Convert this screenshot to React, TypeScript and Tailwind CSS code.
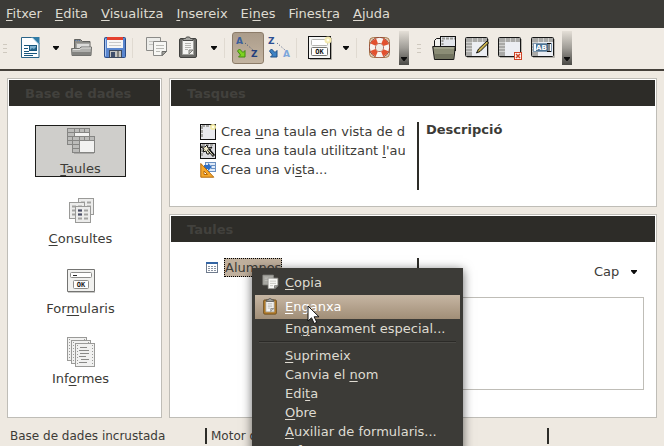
import React from "react";

type Node = React.ReactNode;

/* Label with its mnemonic letter marked by a leading underscore, e.g. "Ei_nes". */
function Mnemonic({ text }: { text: string }) {
  const at = text.indexOf("_");
  if (at < 0) return <>{text}</>;
  return (
    <>
      {text.slice(0, at)}
      <span className="underline decoration-1 underline-offset-2">{text[at + 1]}</span>
      {text.slice(at + 2)}
    </>
  );
}

function Icon({ size = 24, children }: { size?: number; children: Node }) {
  return (
    <svg width={size} height={size} viewBox={`0 0 ${size} ${size}`} fill="none" aria-hidden="true" className="shrink-0">
      {children}
    </svg>
  );
}

function NewDocIcon() {
  return (
    <Icon>
      <path d="M3.5 1.5h11.5l6 6v14h-17.500z" fill="#fdfeff" stroke="#2b6488" />
      <path d="M14 1h7.500v8z" fill="#2f7ba6" />
      <path d="M14 1.500l7 7" stroke="#b9d9ea" />
      <path d="M6 9.500h5M6 12.500h4M6 15.500h5M6 17.500h13M6 19.500h9" stroke="#17567c" />
      <rect x="11.500" y="9.500" width="7" height="5" fill="#7fb2d0" stroke="#17567c" />
      <path d="M12 14l2-2 2 1 2-2v3z" fill="#24658b" />
    </Icon>
  );
}

function OpenIcon() {
  return (
    <Icon>
      <path d="M4.500 14V3.500h6l2 2h7.500V14z" fill="#8d8d89" stroke="#62625f" />
      <path d="M5 4.500h5" stroke="#5576a8" strokeDasharray="1 1" />
      <path d="M6.500 13V7.500h13V13z" fill="#dcdcda" stroke="#a5a5a2" />
      <path d="M1.500 12.500h8l1.500-1.500h10.500l-.5 8.500h-19z" fill="#b0b0ad" stroke="#71716e" />
      <path d="M2 16h19v3H2z" fill="#838380" />
      <path d="M3 13.500h7l1.500-1.500h9.500" stroke="#dededc" />
    </Icon>
  );
}

function SaveIcon() {
  return (
    <Icon>
      <rect x="2.500" y="1.500" width="21" height="20" rx="1" fill="#5a86cf" stroke="#2c4d87" />
      <rect x="5" y="1" width="16" height="3" fill="#e5402e" />
      <rect x="5" y="4" width="16" height="8" fill="#f6f6f6" />
      <path d="M7 6.500h12M7 9.500h12" stroke="#c9c9c9" />
      <path d="M3.500 3v17" stroke="#a7c3ee" />
      <rect x="7.500" y="14.500" width="12" height="7" fill="#c3c3c0" stroke="#3c4a60" />
      <path d="M16 15v6" stroke="#81817d" strokeWidth="2" />
      <rect x="9" y="16" width="4" height="5" fill="#3e4e6b" />
    </Icon>
  );
}

function CopyIcon({ light = false }: { light?: boolean }) {
  const line = light ? "#8e8e88" : "#8b8b88";
  return (
    <Icon>
      <path d="M2.500 1.500h14v13h-14z" fill={light ? "#a7a7a1" : "#ecece9"} stroke={line} />
      <path d="M5 5.500h9M5 8.500h9" stroke="#c4c4c0" />
      <path d="M9.500 5.500h13v10l-4 4h-9z" fill="#f7f7f4" stroke={line} />
      <path d="M12 9.500h8M12 12.500h8M12 15.500h4" stroke="#b9b9b4" />
      <path d="M18 19.500v-4h4.500z" fill="#a9a9a4" stroke="#6b6b68" />
    </Icon>
  );
}

function PasteIcon({ board = "#6a6a67", edge = "#41413f" }: { board?: string; edge?: string }) {
  return (
    <Icon>
      <rect x="3.500" y="2.500" width="17" height="19" rx="1.500" fill={board} stroke={edge} />
      <path d="M6.500 4.500h11v14h-11z" fill="#f4f4f2" stroke="#a3a39f" />
      <path d="M7 4.500v-2h2.500l1-1.500h3l1 1.500h2.500v2z" fill="#a6a6a2" stroke="#4b4b49" />
      <path d="M9 7.500h6M9 9.500h6M9 11.500h6M9 13.500h3" stroke="#b5b5b1" />
      <path d="M13 18v-4h4z" fill="#c9c9c5" stroke="#7f7f7b" />
    </Icon>
  );
}

function SortIcon({ from, to, arrow, edge, a, b }: { from: string; to: string; arrow: string; edge: string; a: string; b: string }) {
  return (
    <Icon>
      <text x="0" y="8" fontFamily="DejaVu Sans" fontWeight="700" fontSize="9" fill={a}>{from}</text>
      <text x="15" y="21" fontFamily="DejaVu Sans" fontWeight="700" fontSize="9" fill={b}>{to}</text>
      <path d="M9 7l8 7" stroke="#3a4e78" strokeDasharray="1 2" />
      <path d="M1.500 15l2-2 3.500 3.500 2-2V21H2.500l2-2z" fill={arrow} stroke={edge} />
    </Icon>
  );
}

function FormIcon() {
  return (
    <Icon>
      <path d="M2 23.500h21.500V2" stroke="#a9a69f" />
      <rect x=".5" y=".5" width="22" height="22" fill="#f6f6f4" stroke="#111111" />
      <rect x="3.500" y="3.500" width="16" height="6" rx="1" fill="#ffffff" stroke="#b5b5b2" />
      <rect x="3.500" y="11.500" width="16" height="8" rx="1" fill="#ffffff" stroke="#777774" />
      <text x="11.500" y="18" textAnchor="middle" fontFamily="DejaVu Sans Mono" fontWeight="700" fontSize="7" fill="#111111">OK</text>
      <circle cx="20" cy="4" r="3.500" fill="#f3e9b0" />
      <circle cx="20" cy="4" r="1.500" fill="#fffde8" />
    </Icon>
  );
}

function HelpIcon() {
  return (
    <Icon>
      <rect x="1.500" y="1.500" width="20" height="20" rx="4" fill="#e3d6bd" stroke="#a9764c" />
      <circle cx="11.500" cy="11.500" r="7" stroke="#8a3a2c" strokeWidth="7" />
      <circle cx="11.500" cy="11.500" r="7" stroke="#f8f3ef" strokeWidth="5.500" />
      <circle cx="11.500" cy="11.500" r="7" stroke="#e2512f" strokeWidth="5.500" strokeDasharray="5.500 5.500" strokeDashoffset="-2.750" />
      <circle cx="11.500" cy="11.500" r="3.500" fill="#f0ebe4" />
    </Icon>
  );
}

function GridBase() {
  return (
    <>
      <path d="M2 21.500h21.500V3" stroke="#b5b2ab" />
      <rect x=".5" y="1.500" width="22" height="19" rx="1" fill="#eceef3" stroke="#161616" />
      <path d="M1 2h21v4H7v14H1z" fill="#a9a9a7" />
      <path d="M7.500 2v4M12.500 2v4M17.500 2v4M1 6.500h6M1 9.500h6M1 12.500h6M1 15.500h6" stroke="#cfcfcd" />
    </>
  );
}

function OpenObjectIcon() {
  return (
    <Icon>
      <path d="M2.500 12V4.500l2-2h4V12z" fill="#f1f1ef" stroke="#111111" />
      <rect x="8.500" y=".5" width="15" height="14" fill="#e3e6ec" stroke="#111111" />
      <path d="M10 2.500h13" stroke="#9b9b98" strokeWidth="2" strokeDasharray="3 1" />
      <path d="M10.500 4v7" stroke="#9b9b98" strokeWidth="2" strokeDasharray="2 1" />
      <path d="M.7 10.500h22.600l-1.500 13H2.500z" fill="#8b8d76" stroke="#161616" />
      <path d="M2 12h20" stroke="#b5b7a2" />
      <path d="M3 18h18.500l-.5 5H3.500z" fill="#727460" />
    </Icon>
  );
}

function EditObjectIcon() {
  return (
    <Icon>
      <GridBase />
      <path d="M11.500 17l2-4 8.500-8 1.500 2-8.500 8.500z" fill="#c7b04c" stroke="#161616" />
    </Icon>
  );
}

function DeleteObjectIcon() {
  return (
    <Icon>
      <GridBase />
      <rect x="16.500" y="16.500" width="7" height="7" fill="#fff4f0" stroke="#cf4326" />
      <path d="M18 18l4 4M22 18l-4 4" stroke="#cf4326" strokeWidth="1.500" />
    </Icon>
  );
}

function RenameObjectIcon() {
  return (
    <Icon>
      <GridBase />
      <rect x="2.500" y="7.500" width="18" height="8" fill="#f5f8fb" stroke="#7d97ae" />
      <rect x="5" y="8" width="12" height="7" fill="#4d7293" />
      <text x="5" y="14" fontFamily="DejaVu Sans" fontWeight="700" fontSize="7" fill="#ffffff">AB</text>
      <path d="M16 7.500h4M18 8v7M16 15.500h4" stroke="#111111" />
    </Icon>
  );
}

function TablesIcon() {
  const sheet = (x: number, y: number) => (
    <g transform={`translate(${x} ${y})`}>
      <rect x=".5" y=".5" width="22" height="16" fill="#f2f2f1" stroke="#858583" />
      <path d="M1 1h21v4H7v11H1z" fill="#bcbcba" />
      <path d="M7.500 1v15M12.500 1v3M17.500 1v3M1 4.500h21M1 8.500h6M1 12.500h6" stroke="#858583" />
    </g>
  );
  return (
    <Icon size={28}>
      {sheet(0, 1)}
      <path d="M7 26.500h20" stroke="#aaa9a7" />
      {sheet(5, 9)}
    </Icon>
  );
}

function QueriesIcon() {
  const sheet = (x: number, y: number, dark = false) => (
    <g transform={`translate(${x} ${y})`}>
      <rect x=".5" y=".5" width="15" height="16" fill="#ececeb" stroke="#9a9a98" />
      <path d="M3 4.500h4M9 4.500h4M3 8.500h4M9 8.500h4M3 12.500h4M9 12.500h4" stroke="#a3a3a1" strokeWidth="2" />
      {dark && <path d="M3 4.500h4M3 8.500h4" stroke="#4a4e68" strokeWidth="2" />}
    </g>
  );
  return (
    <Icon size={28}>
      {sheet(11, 1)}
      {sheet(2, 5)}
      {sheet(8, 9, true)}
    </Icon>
  );
}

function FormsIcon() {
  return (
    <Icon size={28}>
      <path d="M1 25.500h27" stroke="#c9c9c7" />
      <rect x="0" y="2" width="28" height="23" rx="1" fill="#747472" />
      <rect x="1" y="3" width="26" height="21" fill="#f1f1ef" />
      <rect x="3.500" y="5.500" width="21" height="5" rx="1" fill="#ffffff" stroke="#8e8e8c" />
      <path d="M6 8.500h4" stroke="#222222" />
      <rect x="6.500" y="13.500" width="15" height="8" rx="1" fill="#ffffff" stroke="#8e8e8c" />
      <text x="14" y="20" textAnchor="middle" fontFamily="DejaVu Sans Mono" fontWeight="700" fontSize="7" fill="#222222">OK</text>
    </Icon>
  );
}

function ReportsIcon() {
  const sheet = (x: number, y: number) => (
    <g transform={`translate(${x} ${y})`}>
      <rect x=".5" y=".5" width="19" height="23" fill="#f1f1f0" stroke="#9a9a98" />
      <path d="M2.500 2v21M17.500 2v21" stroke="#9a9a98" strokeDasharray="1 2" />
    </g>
  );
  return (
    <svg width="28" height="31" viewBox="0 0 28 31" fill="none" aria-hidden="true" className="shrink-0">
      {sheet(0, 0)}
      {sheet(4, 3)}
      {sheet(8, 6)}
      <path d="M13 10.500h7M12 13.500h10M13 16.500h9M12 19.500h7M14 22.500h8M12 25.500h8" stroke="#8a8a88" />
    </svg>
  );
}

function DesignTaskIcon() {
  return (
    <Icon size={16}>
      <rect x=".5" y=".5" width="15" height="15" fill="#e9eaee" stroke="#111111" />
      <path d="M2 2h12M2 2v12" stroke="#a5a5a2" strokeWidth="2" strokeDasharray="3 1" />
      <circle cx="13" cy="3" r="3" fill="#f2eaa6" />
      <circle cx="13" cy="3" r="1.200" fill="#fffde8" />
    </Icon>
  );
}

function WizardTaskIcon() {
  return (
    <Icon size={16}>
      <rect x=".5" y=".5" width="15" height="15" fill="#dcdce0" stroke="#111111" />
      <path d="M2 2h12M2 2v12" stroke="#a5a5a2" strokeWidth="2" strokeDasharray="3 1" />
      <path d="M7 2l1 3 4-1-2 3-1 4-2 0-1-3-3 1 1-3-3-2h4z" fill="#f2eccb" stroke="#111111" />
      <path d="M8 6l6 7" stroke="#111111" strokeWidth="3" />
      <path d="M7.500 6l5.500 6.500" stroke="#f2eccb" />
    </Icon>
  );
}

function ViewTaskIcon() {
  return (
    <Icon size={16}>
      <rect x="5.500" y=".5" width="10" height="9" fill="#dfeaf8" stroke="#6a8fc0" />
      <path d="M11 3.500h4M11 6.500h4" stroke="#6a8fc0" />
      <path d="M4 3h4V1l4 4-4 4V7H4z" fill="#2f6fc4" />
      <path d="M.8 1.500v13.700h13z" fill="#f6a82c" stroke="#b36a0c" />
      <path d="M4 9v3.500h3.500z" fill="#ffffff" stroke="#b36a0c" />
    </Icon>
  );
}

function TableItemIcon() {
  return (
    <Icon size={12}>
      <rect x=".5" y=".5" width="11" height="10" fill="#ffffff" stroke="#6f7b8d" />
      <rect x="0" y="0" width="12" height="2" fill="#3465a4" />
      <path d="M2 4.500h2M5 4.500h2M8 4.500h2M2 6.500h2M5 6.500h2M8 6.500h2M2 8.500h2M5 8.500h2M8 8.500h2" stroke="#8a94a3" />
    </Icon>
  );
}

function Caret() {
  return (
    <svg width="6" height="4" viewBox="0 0 6 4" aria-hidden="true" className="shrink-0">
      <path d="M0 0h6v1L3.500 4h-1L0 1z" fill="#0c0c0c" />
    </svg>
  );
}

function Tool({ label, active = false, children }: { label: string; active?: boolean; children: Node }) {
  return (
    <button
      type="button"
      aria-label={label}
      aria-pressed={active || undefined}
      className={
        active
          ? "flex size-8 shrink-0 items-center justify-center rounded-[3px] border border-[#8c7c69] bg-linear-to-b from-[#ab9c8a] to-[#c3b4a1]"
          : "flex size-8 shrink-0 items-center justify-center"
      }
    >
      {children}
    </button>
  );
}

function ToolMenu({ label }: { label: string }) {
  return (
    <button type="button" aria-label={label} className="flex h-8 w-5 shrink-0 items-center justify-center">
      <Caret />
    </button>
  );
}

function Separator({ wide = false }: { wide?: boolean }) {
  return (
    <div className={wide ? "w-[10px] shrink-0 pl-0.5" : "w-2 shrink-0"}>
      <div className="h-5 w-px bg-[#e0dad1]" />
    </div>
  );
}

function Grip({ wide = false }: { wide?: boolean }) {
  return (
    <div className={wide ? "flex w-[19px] shrink-0 flex-col gap-[3px] pl-2" : "flex w-[14px] shrink-0 flex-col gap-[3px] pl-[3px]"}>
      <div className="h-px w-1 bg-[#cfc9bf]" />
      <div className="h-px w-1 bg-[#cfc9bf]" />
      <div className="h-px w-1 bg-[#cfc9bf]" />
    </div>
  );
}

function Overflow() {
  return (
    <button
      type="button"
      aria-label="Més"
      className="ml-[3px] flex h-[34px] w-[10px] shrink-0 items-end justify-center bg-linear-to-b from-[#e4dfd7] via-[#a09d97] to-[#4b4a46] pb-1"
    >
      <Caret />
    </button>
  );
}

function PanelTitle({ children }: { children: Node }) {
  return <h2 className="h-[26px] bg-[#2d2c28] px-4 text-[13px] leading-[27px] font-bold text-[#42413d]">{children}</h2>;
}

function Category({ icon, label, selected = false }: { icon: Node; label: string; selected?: boolean }) {
  return (
    <button
      type="button"
      className={
        selected
          ? "flex h-[52px] w-[91px] flex-col items-center justify-between border border-[#1c1c1a] bg-[#cfcecb] pt-px"
          : "flex h-[52px] w-[91px] flex-col items-center justify-between border border-transparent pt-px"
      }
    >
      <span className="flex h-7 items-start pl-px">{icon}</span>
      <span className="text-[13px] leading-[15px]">
        <Mnemonic text={label} />
      </span>
    </button>
  );
}

function Task({ icon, label }: { icon: Node; label: string }) {
  return (
    <button type="button" className="flex h-[19px] w-full items-center gap-[5px] overflow-hidden text-left whitespace-nowrap">
      {icon}
      <span className="leading-[19px]">
        <Mnemonic text={label} />
      </span>
    </button>
  );
}

function MenuItem({ icon, label, tall = false, active = false }: { icon?: Node; label: string; tall?: boolean; active?: boolean }) {
  const base = "flex w-full items-center whitespace-nowrap text-left ";
  const look = active ? "bg-linear-to-b from-[#c6b6a3] to-[#a18e77] text-white" : "text-[#dfdbd2]";
  return (
    <button type="button" role="menuitem" className={base + (tall ? "h-6 " : "h-[19px] ") + look}>
      <span className="flex w-[30px] shrink-0 items-center justify-center [&>svg]:size-[18px]">{icon}</span>
      <span>
        <Mnemonic text={label} />
      </span>
    </button>
  );
}

function ContextMenu() {
  return (
    <div
      role="menu"
      className="absolute top-[268px] left-[252px] w-[211px] bg-[#3c3b37] p-[3px] text-[13px] shadow-[0_2px_10px_rgba(0,0,0,0.6)]"
    >
      <MenuItem tall icon={<CopyIcon light />} label="_Copia" />
      <MenuItem tall active icon={<PasteIcon board="#b87f2a" edge="#5f4315" />} label="_Enganxa" />
      <MenuItem label="En_ganxament especial..." />
      <div className="flex h-2 items-center px-1">
        <div className="h-0.5 w-full border-t border-[#2b2a27] bg-[#4a4945]" />
      </div>
      <MenuItem label="_Suprimeix" />
      <MenuItem label="Canvia el _nom" />
      <MenuItem label="Edi_ta" />
      <MenuItem label="_Obre" />
      <MenuItem label="_Auxiliar de formularis..." />
      <MenuItem label="Informe..." />
      <svg width="14" height="20" viewBox="0 0 14 20" aria-hidden="true" className="absolute top-[37px] left-[55px]">
        <path d="M1 1v15l3.500-3.200 2.700 5.700 2.600-1.200-2.700-5.500H12z" fill="#ffffff" stroke="#111111" />
      </svg>
    </div>
  );
}

const MENUS = ["_Fitxer", "_Edita", "_Visualitza", "_Insereix", "Ei_nes", "Finest_ra", "_Ajuda"];

export default function App() {
  return (
    <div className="relative flex h-screen flex-col overflow-hidden bg-[#eee9e1] font-['DejaVu_Sans',sans-serif] text-[13px] text-[#3c3b37]">
      <nav className="flex h-7 shrink-0 items-center gap-px bg-[#3c3b37] text-[#dfdbd2]">
        {MENUS.map((m) => (
          <button key={m} type="button" className="px-[6px] leading-7">
            <Mnemonic text={m} />
          </button>
        ))}
      </nav>

      <div role="toolbar" className="flex h-[43px] shrink-0 items-center border-b-2 border-[#45403a] bg-[#f0ebe4] pb-px">
        <Grip />
        <Tool label="Nou"><NewDocIcon /></Tool>
        <ToolMenu label="Opcions de nou" />
        <Tool label="Obre"><OpenIcon /></Tool>
        <Tool label="Desa"><SaveIcon /></Tool>
        <Separator wide />
        <Tool label="Copia"><CopyIcon /></Tool>
        <Tool label="Enganxa"><PasteIcon /></Tool>
        <ToolMenu label="Opcions d'enganxar" />
        <Separator />
        <Tool label="Ordre ascendent" active>
          <SortIcon from="A" to="Z" arrow="#7ed321" edge="#3f8a0e" a="#3b5f9c" b="#243f7c" />
        </Tool>
        <Tool label="Ordre descendent">
          <SortIcon from="Z" to="A" arrow="#3d82c4" edge="#1f4f86" a="#2d4f92" b="#7da7dc" />
        </Tool>
        <Separator />
        <Tool label="Formulari"><FormIcon /></Tool>
        <ToolMenu label="Opcions de formulari" />
        <Separator />
        <Tool label="Ajuda"><HelpIcon /></Tool>
        <Overflow />
        <Grip wide />
        <div className="flex gap-px">
          <Tool label="Obre l'objecte"><OpenObjectIcon /></Tool>
          <Tool label="Edita l'objecte"><EditObjectIcon /></Tool>
          <Tool label="Suprimeix l'objecte"><DeleteObjectIcon /></Tool>
          <Tool label="Canvia el nom"><RenameObjectIcon /></Tool>
        </div>
        <Overflow />
      </div>

      <main className="flex min-h-0 flex-1 gap-[7px] px-[7px] pt-[7px]">
        <aside className="w-[155px] shrink-0 border border-[#bfbdb7] bg-white p-px">
          <PanelTitle>Base de dades</PanelTitle>
          <div className="flex flex-col gap-[18px] pt-[19px] pl-[26px]">
            <Category selected icon={<TablesIcon />} label="_Taules" />
            <Category icon={<QueriesIcon />} label="_Consultes" />
            <Category icon={<FormsIcon />} label="For_mularis" />
            <Category icon={<ReportsIcon />} label="Inf_ormes" />
          </div>
        </aside>

        <div className="flex min-w-0 flex-1 flex-col gap-[7px]">
          <section className="border border-[#bfbdb7] bg-white p-px">
            <PanelTitle>Tasques</PanelTitle>
            <div className="flex pt-4 pb-[15px]">
              <div className="w-[246px] shrink-0 pr-3 pl-[29px]">
                <Task icon={<DesignTaskIcon />} label="Crea _una taula en vista de d" />
                <Task icon={<WizardTaskIcon />} label="Crea una taula utilitzant _l'au" />
                <Task icon={<ViewTaskIcon />} label="Crea una vi_sta..." />
              </div>
              <div className="h-[68px] w-0.5 bg-[#2d2c28]" />
              <h3 className="pl-[7px] leading-4 font-bold">Descripció</h3>
            </div>
          </section>

          <section className="flex min-h-0 flex-1 flex-col border border-[#bfbdb7] bg-white p-px">
            <PanelTitle>Taules</PanelTitle>
            <div className="flex min-h-0 flex-1 pt-4">
              <div className="w-[246px] shrink-0 pl-[35px]">
                <button type="button" className="flex items-center gap-1.5">
                  <TableItemIcon />
                  <span className="h-[19px] border border-dotted border-black bg-[#c0b09d] leading-[17px]">Alumnos</span>
                </button>
              </div>
              <div className="mb-[26px] w-0.5 shrink-0 bg-[#2d2c28]" />
              <div className="flex min-w-0 flex-1 flex-col pr-[11px] pb-[26px] pl-[7px]">
                <label className="flex h-[39px] shrink-0 items-center justify-end pr-[7px] pb-3">
                  <select aria-label="Previsualització" className="w-[37px] appearance-none bg-transparent">
                    <option>Cap</option>
                  </select>
                  <Caret />
                </label>
                <div className="flex-1 border border-[#bfbdb7]" />
              </div>
            </div>
          </section>
        </div>
      </main>

      <footer className="flex h-7 shrink-0 items-center pt-2 pl-[10px] text-xs leading-4">
        <span className="w-[195px] shrink-0">Base de dades incrustada</span>
        <span className="w-[342px] shrink-0 border-l-2 border-[#2d2c28] pl-1">Motor de</span>
        <span className="h-4 border-l-2 border-[#2d2c28]" />
      </footer>

      <ContextMenu />
    </div>
  );
}
